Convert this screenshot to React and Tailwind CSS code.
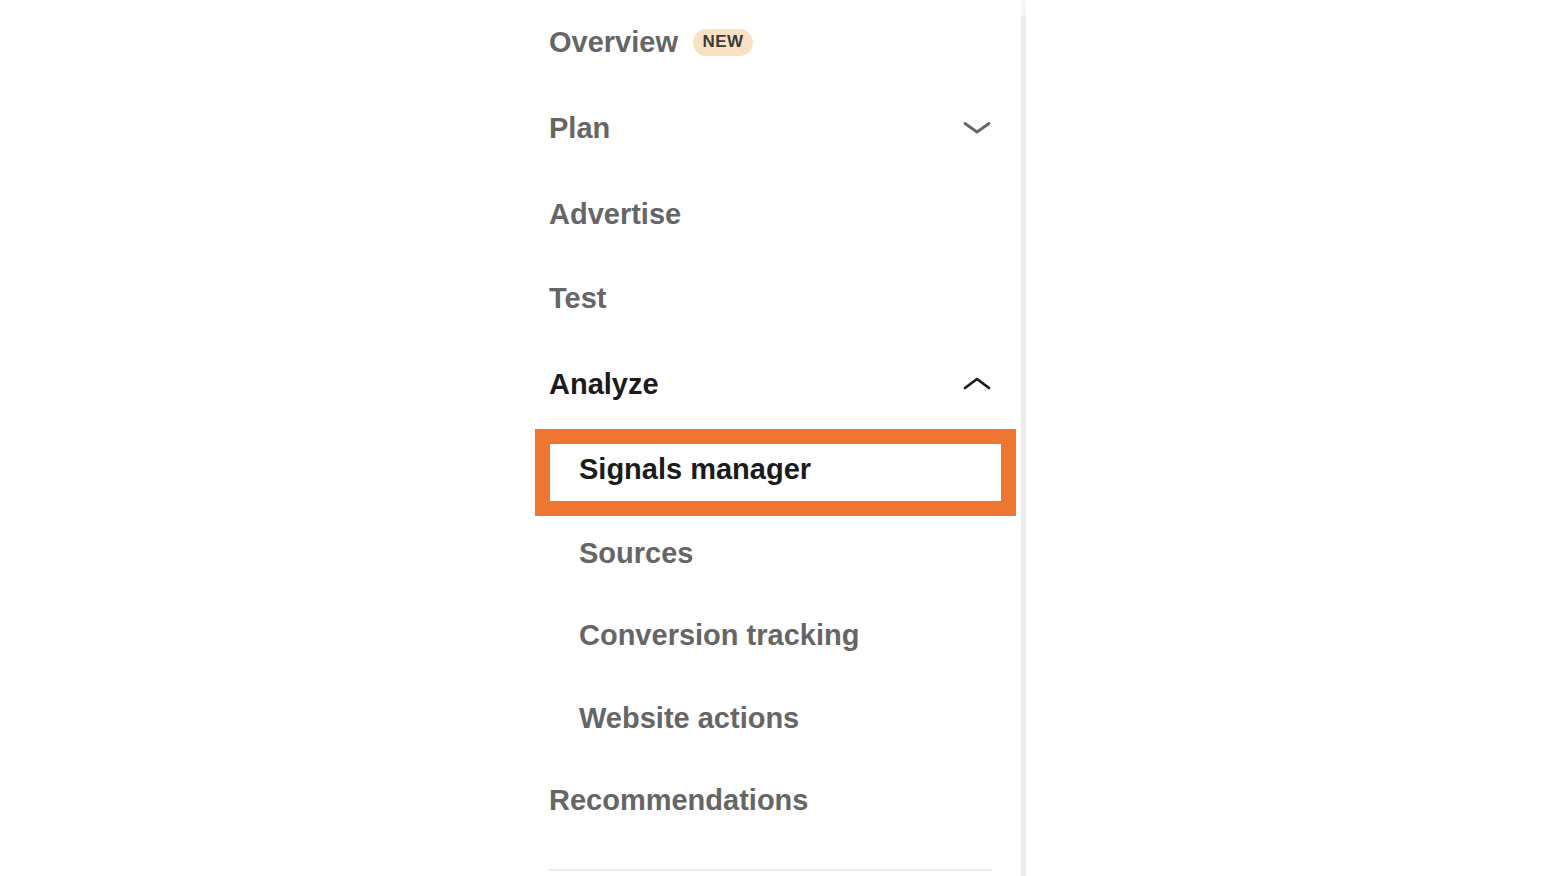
import React from 'react'

const font = { fontFamily: '"Liberation Sans", Arial, sans-serif' }

const Chevron = ({ up, className }) => (
  <svg width="28" height="14" viewBox="0 0 28 14" fill="none" className={className}>
    <path
      d={up ? 'M2 12 L14 3 L26 12' : 'M2 2.5 L14 11 L26 2.5'}
      stroke="currentColor"
      strokeWidth="2.8"
      strokeLinecap="round"
      strokeLinejoin="round"
    />
  </svg>
)

const Row = ({ h, children, sub, active }) => (
  <div className={`flex items-center pt-[3px] ${h} ${sub ? 'pl-[30px]' : ''}`}>
    <span className={`text-[29px] font-bold ${active ? 'text-[#1b1b1b]' : 'text-[#666666]'}`}>
      {children}
    </span>
  </div>
)

export default function App() {
  return (
    <div className="flex h-[876px] w-full bg-white overflow-hidden" style={font}>
      <div className="w-[549px] shrink-0" />

      {/* nav column */}
      <div className="flex flex-col w-[443px] shrink-0">
        <div className="flex items-center h-[84px] gap-[15px]">
          <span className="text-[29px] font-bold text-[#666666] pt-[2px]">Overview</span>
          <span className="flex items-center justify-center w-[60px] h-[27px] rounded-full bg-[#f8e2c2] text-[17px] font-bold tracking-[0.5px] text-[#3a3a3a]">
            NEW
          </span>
        </div>

        <div className="flex items-center justify-between h-[87px]">
          <span className="text-[29px] font-bold text-[#666666] pt-[2px]">Plan</span>
          <Chevron className="text-[#666666] mr-[1px]" />
        </div>

        <Row h="h-[84px]">Advertise</Row>
        <Row h="h-[85px]">Test</Row>

        <div className="flex items-center justify-between h-[86px]">
          <span className="text-[29px] font-bold text-[#1b1b1b] pt-[3px]">Analyze</span>
          <Chevron up className="text-[#1b1b1b] mr-[1px]" />
        </div>

        <div className="relative">
          <Row h="h-[85px]" sub active>Signals manager</Row>
          {/* highlight annotation */}
          <div className="absolute top-[3px] left-[-14px] w-[481px] h-[87px] border-[15px] border-[#ee7630] pointer-events-none" />
        </div>

        <Row h="h-[82px]" sub>Sources</Row>
        <Row h="h-[83px]" sub>Conversion tracking</Row>
        <Row h="h-[82px]" sub>Website actions</Row>
        <Row h="h-[83px]">Recommendations</Row>

        <div className="mt-[28px] h-[2px] bg-[#ececec]" />
      </div>

      <div className="w-[29px] shrink-0" />
      <div className="flex flex-col w-[5px] shrink-0">
        <div className="h-[15px] bg-[#f6f6f6]" />
        <div className="flex-1 bg-[#ededed]" />
      </div>
      <div className="flex-1" />
    </div>
  )
}
